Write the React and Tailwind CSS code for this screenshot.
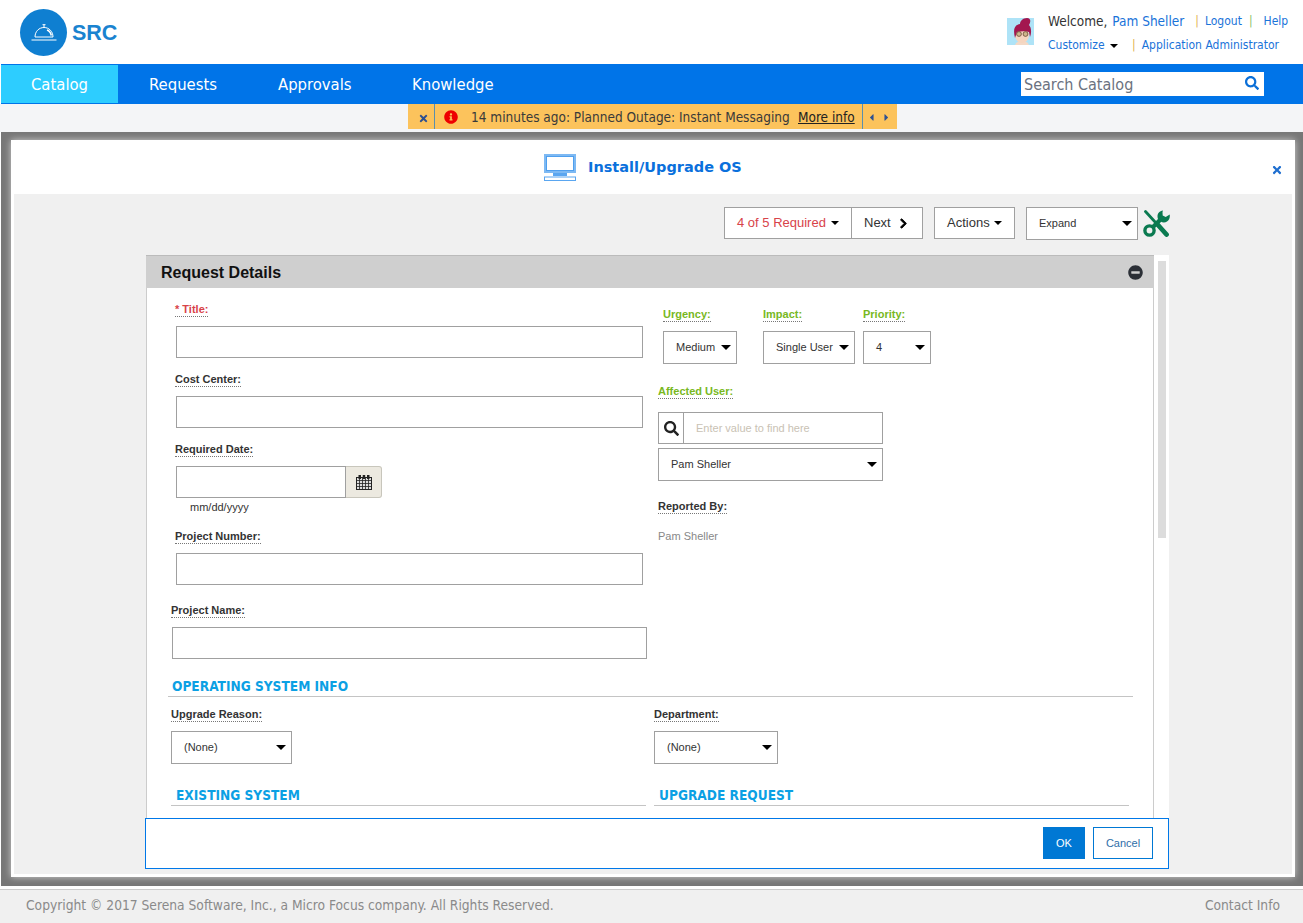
import React from "react";
import { FaTimes, FaInfoCircle, FaCaretLeft, FaCaretRight, FaChevronRight, FaMinusCircle, FaSearch } from "react-icons/fa";

const Caret = ({ className = "" }) => (
  <span className={"inline-block w-0 h-0 border-x-[5px] border-x-transparent border-t-[5px] border-t-black " + className} />
);

const SmallCaret = ({ className = "" }) => (
  <span className={"inline-block w-0 h-0 border-x-[4px] border-x-transparent border-t-[4px] border-t-black " + className} />
);

const Label = ({ children, className = "text-[#333]" }) => (
  <div className={"w-fit text-[11px] font-bold leading-[14px] border-b border-dotted border-[#777] " + className}>{children}</div>
);

const Field = ({ label, labelMl = "ml-[28px]", inputCls = "ml-[29px] w-[467px]", top = "mt-[14px]" }) => (
  <>
    <div className={top + " " + labelMl}><Label>{label}</Label></div>
    <input className={"block mt-[9px] h-[32px] border border-[#a0a0a0] bg-white " + inputCls} />
  </>
);

const Select = ({ value, className = "" }) => (
  <div className={"flex items-center h-[33px] border border-[#a0a0a0] bg-white text-[11px] text-[#333] pl-[12px] pr-[5px] " + className}>
    <span>{value}</span>
    <Caret className="ml-auto" />
  </div>
);

const Heading = ({ children, className = "" }) => (
  <div className={"h-[18px] border-b border-[#c4c4c4] text-[13.600px] leading-[14px] font-bold text-[#0ba0e4] font-['DejaVu_Sans_Condensed','DejaVu_Sans',sans-serif] " + className}>{children}</div>
);

const Logo = () => (
  <div className="flex items-center h-[47px] ml-[20px] mt-[9px]">
    <div className="w-[47px] h-[47px] rounded-full bg-[#0f7fd1] flex items-center justify-center">
      <svg width="26" height="18" viewBox="0 0 26 18" fill="none" stroke="white" strokeWidth="1">
        <path d="M11.500 0.700h3M13 0.700v2.500" />
        <path d="M4 13c0-5.500 4-9.500 9-9.500s9 4 9 9.500z" />
        <path d="M16 6c2.500.8 3.800 3 4.300 5.500" strokeWidth="1.600" />
        <path d="M0.500 16h25" />
      </svg>
    </div>
    <span className="ml-[5px] text-[21.500px] leading-[26px] font-bold text-[#1a83d0] font-['Liberation_Sans',sans-serif]">SRC</span>
  </div>
);

const Avatar = () => (
  <svg width="27" height="27" viewBox="0 0 27 27" className="block">
    <rect width="27" height="27" fill="#aee3f7" />
    <path d="M8 27c1-3 4-4 7-4s6 1 7 4z" fill="#f3d9c6" />
    <ellipse cx="15" cy="17" rx="7" ry="8" fill="#f5d5bf" />
    <path d="M8 20C6 12 7 7 13 6 13 3 16 0 20 0c4 0 4 4 2 7 2 2 3 7 1 12l-1-5c-3-1-8-1-12 0z" fill="#a3174f" />
    <circle cx="12" cy="16" r="2.400" fill="#cdb68c" stroke="#6b4a32" strokeWidth="0.800" />
    <circle cx="18.500" cy="16" r="2.400" fill="#cdb68c" stroke="#6b4a32" strokeWidth="0.800" />
  </svg>
);

const Monitor = () => (
  <svg width="32" height="27" viewBox="0 0 32 27" fill="none" className="block">
    <rect x="1" y="1" width="30" height="17" fill="none" stroke="#7db9f3" strokeWidth="2" />
    <rect x="2.500" y="2.500" width="27" height="14" fill="none" stroke="#4f9fee" strokeWidth="1" />
    <rect x="9" y="19" width="14" height="3" fill="#5aa6f0" />
    <rect x="0.500" y="23" width="31" height="3.500" fill="none" stroke="#5aa6f0" strokeWidth="1" />
  </svg>
);

const Calendar = () => (
  <svg width="16" height="15" viewBox="0 0 16 15" className="block">
    <rect x="0.500" y="2.500" width="15" height="12" fill="#ddd" stroke="#222" />
    <path d="M0 5.500h16M0 8.500h16M0 11.500h16M3.500 3v12M6.500 3v12M9.500 3v12M12.500 3v12" stroke="#222" strokeWidth="0.800" />
    <rect x="2.500" y="0" width="2.500" height="4" fill="#222" />
    <rect x="11" y="0" width="2.500" height="4" fill="#222" />
    <rect x="6.700" y="0" width="2.500" height="4" fill="#222" />
  </svg>
);

const Tools = () => (
  <svg width="27" height="27" viewBox="0 0 27 27" fill="none" className="block ml-[5px]">
    <path d="M2.500 1.500 13 13" stroke="#0a7a50" strokeWidth="2.800" strokeLinecap="round" />
    <path d="M15 15 23.500 24.500" stroke="#0a7a50" strokeWidth="4.800" strokeLinecap="round" />
    <path d="M9 18 17 10" stroke="#0a7a50" strokeWidth="4.200" />
    <path d="M20 0.500c-4.500 .6-6.500 4.500-5 8.500 2 3.500 6.500 4.500 9 2.500 2.200-1.500 3.200-4 2.700-7l-4 2.500-3-1.500 -.2-3.500z" fill="#0a7a50" />
    <circle cx="6.500" cy="20.500" r="4.600" stroke="#0a7a50" strokeWidth="3.400" />
  </svg>
);

export default function App() {
  return (
    <div className="w-[1303px] h-[923px] overflow-hidden flex flex-col bg-white pl-px text-[#333] font-['DejaVu_Sans_Condensed','DejaVu_Sans',sans-serif]">
      {/* Header */}
      <header className="h-[64px] flex shrink-0 -ml-px">
        <Logo />
        <div className="ml-auto flex pt-[18px]">
          <Avatar />
          <div className="ml-[14px] w-[255px]">
            <div className="flex items-center h-[15px] mt-[-4px] text-[13.500px] leading-[15px] whitespace-nowrap">
              <span>Welcome,</span>
              <span className="ml-[5px] text-[#1a73d9]">Pam Sheller</span>
              <span className="ml-[11px] text-[#e0b050] text-[12px]">|</span>
              <span className="ml-[6px] text-[12px] text-[#1a73d9]">Logout</span>
              <span className="ml-[7px] text-[#8ac06a] text-[12px]">|</span>
              <span className="ml-[11px] text-[12px] text-[#1a73d9]">Help</span>
            </div>
            <div className="flex items-center mt-[9px] h-[15px] text-[12px] leading-[15px] text-[#1a73d9] whitespace-nowrap">
              <span className="w-[57px]">Customize</span>
              <SmallCaret className="ml-[5px]" />
              <span className="ml-[14px] text-[#e0b050]">|</span>
              <span className="ml-[6px]">Application Administrator</span>
            </div>
          </div>
        </div>
      </header>

      {/* Nav */}
      <nav className="h-[40px] shrink-0 bg-[#0074e8] flex items-stretch text-white text-[16.500px]">
        <a className="w-[117px] mt-px mb-px pl-[30px] pt-[2px] flex items-center bg-[#2dcdff]">Catalog</a>
        <a className="w-[130px] pl-[31px] pt-[2px] flex items-center">Requests</a>
        <a className="w-[135px] pl-[30px] pt-[2px] flex items-center">Approvals</a>
        <a className="w-[130px] pl-[29px] pt-[2px] flex items-center">Knowledge</a>
        <div className="ml-[508px] mt-[8px] w-[243px] h-[24px] bg-white flex items-center pl-[3px] pr-[5px] text-[16px] text-[#6b7280]">
          <span className="pt-[2px]">Search Catalog</span>
          <FaSearch className="ml-auto -mt-[3px] text-[#0a6fd8] text-[14px]" />
        </div>
      </nav>

      {/* Alert row */}
      <div className="h-[28px] shrink-0 bg-[#f4f5f7] -ml-px flex">
        <div className="ml-[408px] w-[489px] h-[25px] bg-[#fcc35c] flex items-center text-[13.500px] text-[#3a3a3a] whitespace-nowrap">
          <div className="w-[27px] h-full border-r border-[#5a8fae] flex items-center justify-center text-[#2e5090] text-[11px] pt-[3px] pl-[4px]"><FaTimes /></div>
          <FaInfoCircle className="ml-[9px] text-[14px] text-[#ee0000]" />
          <span className="ml-[13px] w-[327px] pt-[1px]">14 minutes ago: Planned Outage: Instant Messaging</span>
          <span className="underline text-[#222] w-[64px] pt-[1px]">More info</span>
          <div className="h-full border-l border-[#5a8fae] flex items-center gap-[4px] pl-[3px] text-[#2e5090] text-[11px] pt-[1px]"><FaCaretLeft /><FaCaretRight /></div>
        </div>
      </div>

      {/* Modal frame */}
      <div className="h-[754px] shrink-0 bg-[#777] pt-[8px] pl-[10px] pr-[8px]">
        <div className="h-[737px] bg-white shadow-[0_0_7px_rgba(255,255,255,0.65)] pl-[3px] pr-[3px] pb-[3px] flex flex-col">
          <div className="h-[54px] shrink-0 flex items-center">
            <div className="ml-[530px] mt-[1px]"><Monitor /></div>
            <span className="ml-[12px] text-[14.500px] pt-[1px] font-bold text-[#0a70dc] font-['DejaVu_Sans',sans-serif]">Install/Upgrade OS</span>
            <FaTimes className="ml-auto mr-[9px] mt-[6px] text-[12px] text-[#1f6fd0]" />
          </div>
          <div className="flex-1 bg-[#f0f0f0] pl-[131px] font-['Liberation_Sans',sans-serif]">
            <div className="w-[1024px]">
              {/* Toolbar */}
              <div className="flex items-center justify-end h-[32px] mt-[13px] -mr-px text-[13px]">
                <div className="flex h-[32px] border border-[#a0a0a0] bg-white">
                  <div className="w-[127px] flex items-center pl-[12px] text-[#d8434a] border-r border-[#a0a0a0]">
                    <span>4 of 5 Required</span><SmallCaret className="ml-[5px]" />
                  </div>
                  <div className="w-[70px] flex items-center pl-[12px]">Next<FaChevronRight className="ml-[7px] text-[11px] text-black stroke-[40px]" /></div>
                </div>
                <div className="ml-[11px] w-[81px] h-[32px] border border-[#a0a0a0] bg-white flex items-center pl-[12px]">
                  Actions<SmallCaret className="ml-[4px]" />
                </div>
                <Select value="Expand" className="ml-[11px] w-[112px] h-[32px]" />
                <Tools />
              </div>

              {/* Panel */}
              <div className="flex h-[563px] mt-[16px] ml-px overflow-hidden">
                <div className="w-[1008px] shrink-0 bg-white border-x border-[#ccc] flex flex-col">
                  <div className="h-[33px] shrink-0 -mx-px bg-[#cfcfcf] border-t border-[#bbb] flex items-center pl-[15px] pr-[11px]">
                    <span className="text-[16px] font-bold text-[#111] pt-[1px]">Request Details</span>
                    <FaMinusCircle className="ml-auto text-[15px] text-[#2b2f36]" />
                  </div>
                  <div className="flex">
                    <div className="w-[511px] shrink-0">
                      <div className="mt-[14px] ml-[28px]">
                        <Label className="text-[#d8434a]">* Title:</Label>
                      </div>
                      <input className="block mt-[9px] ml-[29px] w-[467px] h-[32px] border border-[#a0a0a0]" />
                      <Field label="Cost Center:" />
                      <div className="mt-[14px] ml-[28px]"><Label>Required Date:</Label></div>
                      <div className="flex mt-[9px] ml-[29px]">
                        <input className="w-[170px] h-[32px] border border-[#a0a0a0]" />
                        <div className="w-[36px] h-[32px] bg-[#ece9e0] border border-l-0 border-[#c8c6bc] rounded-r-[3px] flex items-center justify-center"><Calendar /></div>
                      </div>
                      <div className="ml-[43px] mt-[2px] h-[14px] text-[11px] leading-[14px]">mm/dd/yyyy</div>
                      <Field label="Project Number:" top="mt-[15px]" />
                      <Field label="Project Name:" top="mt-[18px]" labelMl="ml-[24px]" inputCls="ml-[25px] w-[475px]" />
                    </div>
                    <div className="flex-1">
                      <div className="flex mt-[19px] ml-[5px]">
                        <div className="w-[100px]">
                          <Label className="text-[#78b81e]">Urgency:</Label>
                          <Select value="Medium" className="mt-[9px] w-[74px]" />
                        </div>
                        <div className="w-[100px]">
                          <Label className="text-[#78b81e]">Impact:</Label>
                          <Select value="Single User" className="mt-[9px] w-[92px]" />
                        </div>
                        <div className="w-[68px]">
                          <Label className="text-[#78b81e]">Priority:</Label>
                          <Select value="4" className="mt-[9px] w-[68px]" />
                        </div>
                      </div>
                      <div className="mt-[20px]"><Label className="text-[#78b81e]">Affected User:</Label></div>
                      <div className="mt-[13px] w-[225px] h-[32px] border border-[#a0a0a0] flex">
                        <div className="w-[25px] border-r border-[#a0a0a0] flex items-center justify-center"><FaSearch className="text-[15px] text-[#222]" /></div>
                        <span className="self-center ml-[12px] text-[11px] text-[#c9c2b4]">Enter value to find here</span>
                      </div>
                      <Select value="Pam Sheller" className="mt-[4px] w-[225px]" />
                      <div className="mt-[18px]"><Label>Reported By:</Label></div>
                      <div className="mt-[15px] text-[11px] leading-[14px] text-[#888]">Pam Sheller</div>
                    </div>
                  </div>
                  <Heading className="mt-[20px] ml-[21px] w-[965px] pl-[4px]">OPERATING SYSTEM INFO</Heading>
                  <div className="flex mt-[10px] ml-[24px]">
                    <div className="w-[483px]">
                      <Label>Upgrade Reason:</Label>
                      <Select value="(None)" className="mt-[9px] w-[121px]" />
                    </div>
                    <div>
                      <Label>Department:</Label>
                      <Select value="(None)" className="mt-[9px] w-[124px]" />
                    </div>
                  </div>
                  <div className="flex mt-[24px] ml-[24px]">
                    <Heading className="w-[475px] pl-[5px]">EXISTING SYSTEM</Heading>
                    <Heading className="ml-[8px] w-[475px] pl-[5px]">UPGRADE REQUEST</Heading>
                  </div>
                </div>
                <div className="w-[15px] bg-white pt-[6px] pl-[4px]">
                  <div className="w-[8px] h-[277px] bg-[#dcdcdc]" />
                </div>
              </div>

              {/* Footer bar */}
              <div className="h-[51px] w-[1024px] bg-white border border-[#0078e8] flex items-center justify-end pr-[15px] pb-[1px] text-[11px]">
                <div className="w-[42px] h-[32px] bg-[#0078d4] text-white flex items-center justify-center">OK</div>
                <div className="ml-[8px] w-[60px] h-[32px] border border-[#0078d4] text-[#2f6ea8] flex items-center justify-center">Cancel</div>
              </div>
            </div>
          </div>
        </div>
      </div>

      {/* Footer */}
      <div className="h-[3px] shrink-0" />
      <footer className="flex-1 -ml-px border-t border-[#ccc] bg-[#f0f0f0] flex items-center pl-[26px] pr-[23px] pb-[2px] text-[13.700px] text-[#8a8a8a]">
        <span>Copyright © 2017 Serena Software, Inc., a Micro Focus company. All Rights Reserved.</span>
        <span className="ml-auto">Contact Info</span>
      </footer>
    </div>
  );
}
